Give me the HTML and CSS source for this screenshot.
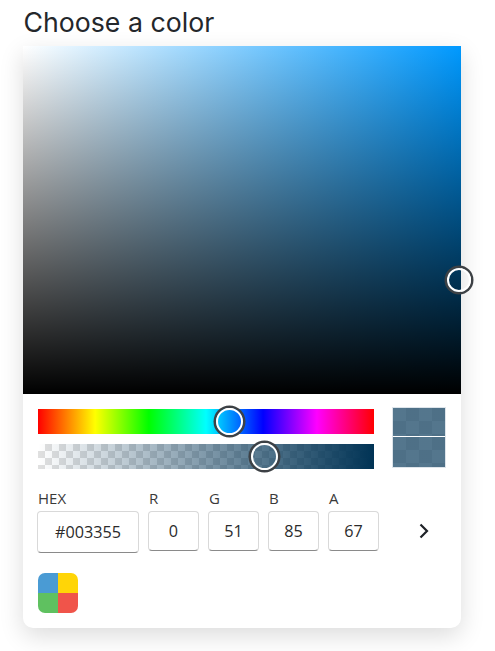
FILE: index.html
```html
<!DOCTYPE html>
<html lang="en">
  <head>
    <meta charset="UTF-8" />
    <meta name="viewport" content="width=device-width, initial-scale=1.0" />
    <title>Choose a color</title>
    <link rel="stylesheet" href="styles.css">
  </head>
  <body>
    <h1 class="title">Choose a color</h1>
    <div class="picker">
      <div class="canvas">
        <span class="thumb canvas-thumb"></span>
      </div>
      <div class="sliders-row">
        <div class="sliders">
          <div class="slider hue">
            <span class="thumb hue-thumb"></span>
          </div>
          <div class="slider alpha">
            <span class="thumb alpha-thumb"></span>
          </div>
        </div>
        <div class="preview">
          <div class="preview-box preview-top"></div>
          <div class="preview-box"></div>
        </div>
      </div>
      <div class="fields">
        <label class="field field-hex">HEX
          <input type="text" value="#003355" />
        </label>
        <label class="field">R
          <input type="text" value="0" />
        </label>
        <label class="field">G
          <input type="text" value="51" />
        </label>
        <label class="field">B
          <input type="text" value="85" />
        </label>
        <label class="field">A
          <input type="text" value="67" />
        </label>
        <svg class="next" width="12" height="18" viewBox="0 0 12 18">
          <path d="M2.5 2.5 L9 9 L2.5 15.5" fill="none" stroke="#1f2328" stroke-width="2.2" />
        </svg>
      </div>
      <div class="swatches">
        <span class="swatch"></span>
        <span class="swatch"></span>
        <span class="swatch"></span>
        <span class="swatch"></span>
      </div>
    </div>
  </body>
</html>
```

FILE: styles.css
```css
* {
  margin: 0;
  padding: 0;
  box-sizing: border-box;
}
body {
  background-color: #fff;
  font-family: "Open Sans", sans-serif;
  color: #2b2b2b;
  height: 651px;
  overflow: hidden;
}
.title {
  font-family: Inter, sans-serif;
  font-size: 26.7px;
  font-weight: 400;
  line-height: 32px;
  color: #24272b;
  padding: 6px 0 8px 23.5px;
}
.picker {
  position: relative;
  width: 438px;
  height: 582px;
  margin-left: 23px;
  background-color: #fff;
  border-radius: 0 0 10px 10px;
  box-shadow: 0 8px 24px rgba(0, 0, 0, 0.14);
}
.canvas {
  position: relative;
  height: 348px;
  background: linear-gradient(to bottom, rgba(0, 0, 0, 0), #000),
    linear-gradient(to right, #fff, #0099ff);
}
.thumb {
  position: absolute;
  border-radius: 50%;
  border: 2px solid #fff;
  box-shadow: 0 0 0 2.5px #3d4145;
  background-color: transparent;
}
.canvas-thumb {
  left: 424px;
  top: 222px;
  width: 24px;
  height: 24px;
}
.sliders-row {
  display: flex;
  padding: 13px 0 0 15px;
  gap: 18px;
}
.sliders {
  display: flex;
  flex-direction: column;
  gap: 10px;
  width: 336px;
  padding-top: 2px;
}
.slider {
  position: relative;
  height: 25px;
}
.hue {
  background: linear-gradient(to right, #f00 0%, #ff0 17%, #0f0 33%, #0ff 50%, #00f 67%, #f0f 83%, #f00 100%);
}
.alpha {
  background: linear-gradient(to right, rgba(0, 51, 85, 0), #003355),
    repeating-conic-gradient(#e0e0e0 0% 25%, #fff 0% 50%) 0 0 / 14px 14px;
}
.hue-thumb {
  left: 178px;
  top: -1px;
  width: 27px;
  height: 27px;
}
.alpha-thumb {
  left: 213px;
  top: -1px;
  width: 27px;
  height: 27px;
}
.preview {
  display: flex;
  flex-direction: column;
  gap: 1px;
  width: 54px;
  height: 61px;
  border: 1px solid #dde4ea;
}
.preview-box {
  flex: 1;
  background: linear-gradient(rgba(0, 51, 85, 0.67), rgba(0, 51, 85, 0.67)),
    repeating-conic-gradient(#ececec 0% 25%, #fff 0% 50%) 0 0 / 26px 26px;
}
.preview-top {
  flex: none;
  height: 28px;
}
.fields {
  display: flex;
  align-items: flex-start;
  gap: 9px;
  padding: 19px 0 0 14px;
}
.field {
  display: flex;
  flex-direction: column;
  gap: 2px;
  width: 51px;
  font-size: 15px;
  line-height: 21px;
  text-indent: 1px;
  color: #3a3a3a;
}
.field-hex {
  width: 102px;
}
.field input {
  width: 100%;
  height: 40px;
  border: 1px solid #d9d9d9;
  border-bottom-color: #8a8a8a;
  border-radius: 4px;
  font-family: "Open Sans", sans-serif;
  font-size: 16.2px;
  color: #2b2b2b;
  text-align: center;
  outline: none;
}
.field-hex input {
  height: 42px;
}
.next {
  margin: 34px 0 0 30px;
}
.swatches {
  display: grid;
  grid-template-columns: 20px 20px;
  grid-template-rows: 20px 20px;
  width: 40px;
  margin: 20px 0 0 15px;
  border-radius: 7px;
  overflow: hidden;
}
.swatch:nth-child(1) {
  background-color: #4a9bd4;
}
.swatch:nth-child(2) {
  background-color: #ffd507;
}
.swatch:nth-child(3) {
  background-color: #5fc160;
}
.swatch:nth-child(4) {
  background-color: #f0544a;
}
```
